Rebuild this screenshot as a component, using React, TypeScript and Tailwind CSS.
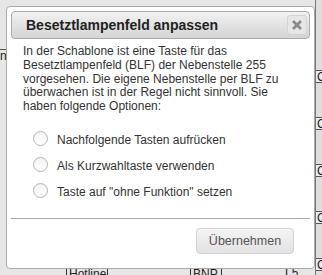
import React from 'react'

const optionen = [
  'Nachfolgende Tasten aufrücken',
  'Als Kurzwahltaste verwenden',
  'Taste auf "ohne Funktion" setzen',
]

function Radio() {
  return (
    <span className="block shrink-0 w-[15px] h-[15px] rounded-full border border-[#b4b4b4] bg-gradient-to-b from-[#f4f4f4] to-white" />
  )
}

export default function App() {
  return (
    <div className="relative w-[322px] h-[275px] overflow-hidden bg-[#e6e6e6] font-['Liberation_Sans',Arial,sans-serif]">
      {/* Seite hinter dem Overlay */}
      <div className="flex h-full">
        <div className="w-[6px] pt-[49px]">
          <div className="border-t border-[#555] text-[12px] leading-[13px] text-[#222] overflow-hidden">n</div>
        </div>
        <div className="flex-1 flex flex-col justify-end">
          <div className="flex items-end h-[8px] text-[12px] leading-[12px] text-[#222]">
            <div className="ml-[60px] w-[42px] h-[8px] border border-b-0 border-[#333] pl-[2px] overflow-hidden">Hotline</div>
            <div className="ml-[82px] w-[32px] h-[8px] border border-b-0 border-[#333] pl-[2px] overflow-hidden">BNP</div>
            <div className="ml-[63px] h-[8px] overflow-hidden">L5</div>
          </div>
        </div>
        <div className="w-[7px] flex flex-col border-l border-[#777] bg-[#dedede] pt-[70px] gap-[34px]">
          {[0, 1, 2, 3, 4].map((i) => (
            <div key={i} className="h-[13px] border-y border-[#555] bg-[#ececec] text-[12px] leading-[12px] text-[#222] pl-[1px] overflow-hidden">C</div>
          ))}
        </div>
      </div>

      {/* Dialog */}
      <div className="absolute left-[6px] top-[6px] w-[309px] h-[263px] rounded-[4px] border border-[#aaaaaa] bg-white p-[4px] flex flex-col">
        <div className="h-[28px] rounded-[4px] border border-[#aaaaaa] bg-gradient-to-b from-[#f2f2f2] to-[#d4d4d4] flex items-center justify-between pl-[14px] pr-[2px]">
          <span className="text-[14px] font-bold text-[#222]">Besetztlampenfeld anpassen</span>
          <span className="w-[20px] h-[20px] rounded-[3px] border border-[#d3d3d3] bg-[#e6e6e6] flex items-center justify-center">
            <svg width="10" height="10" viewBox="0 0 10 10">
              <path d="M2 2 L8 8 M8 2 L2 8" stroke="#8a8a8a" strokeWidth="2.8" strokeLinecap="square" />
            </svg>
          </span>
        </div>

        <div className="px-[12px] pt-[6px] text-[12px] leading-[13.8px] text-[#333]">
          <p>
            In der Schablone ist eine Taste für das Besetztlampenfeld (BLF) der Nebenstelle 255
            vorgesehen. Die eigene Nebenstelle per BLF zu überwachen ist in der Regel nicht
            sinnvoll. Sie haben folgende Optionen:
          </p>
          <div className="flex flex-col gap-[9px] mt-[17px] pl-[10px]">
            {optionen.map((o) => (
              <label key={o} className="flex items-start gap-[9px]">
                <Radio />
                <span className="pt-[3px]">{o}</span>
              </label>
            ))}
          </div>
        </div>

        <div className="mt-auto border-t border-[#aaaaaa] pt-[9px] pb-[10px] pr-[16px] flex justify-end">
          <button className="w-[98px] h-[26px] rounded-[4px] border border-[#d3d3d3] bg-gradient-to-b from-[#f4f4f4] to-[#e2e2e2] text-[12.5px] text-[#555]">
            Übernehmen
          </button>
        </div>
      </div>
    </div>
  )
}
